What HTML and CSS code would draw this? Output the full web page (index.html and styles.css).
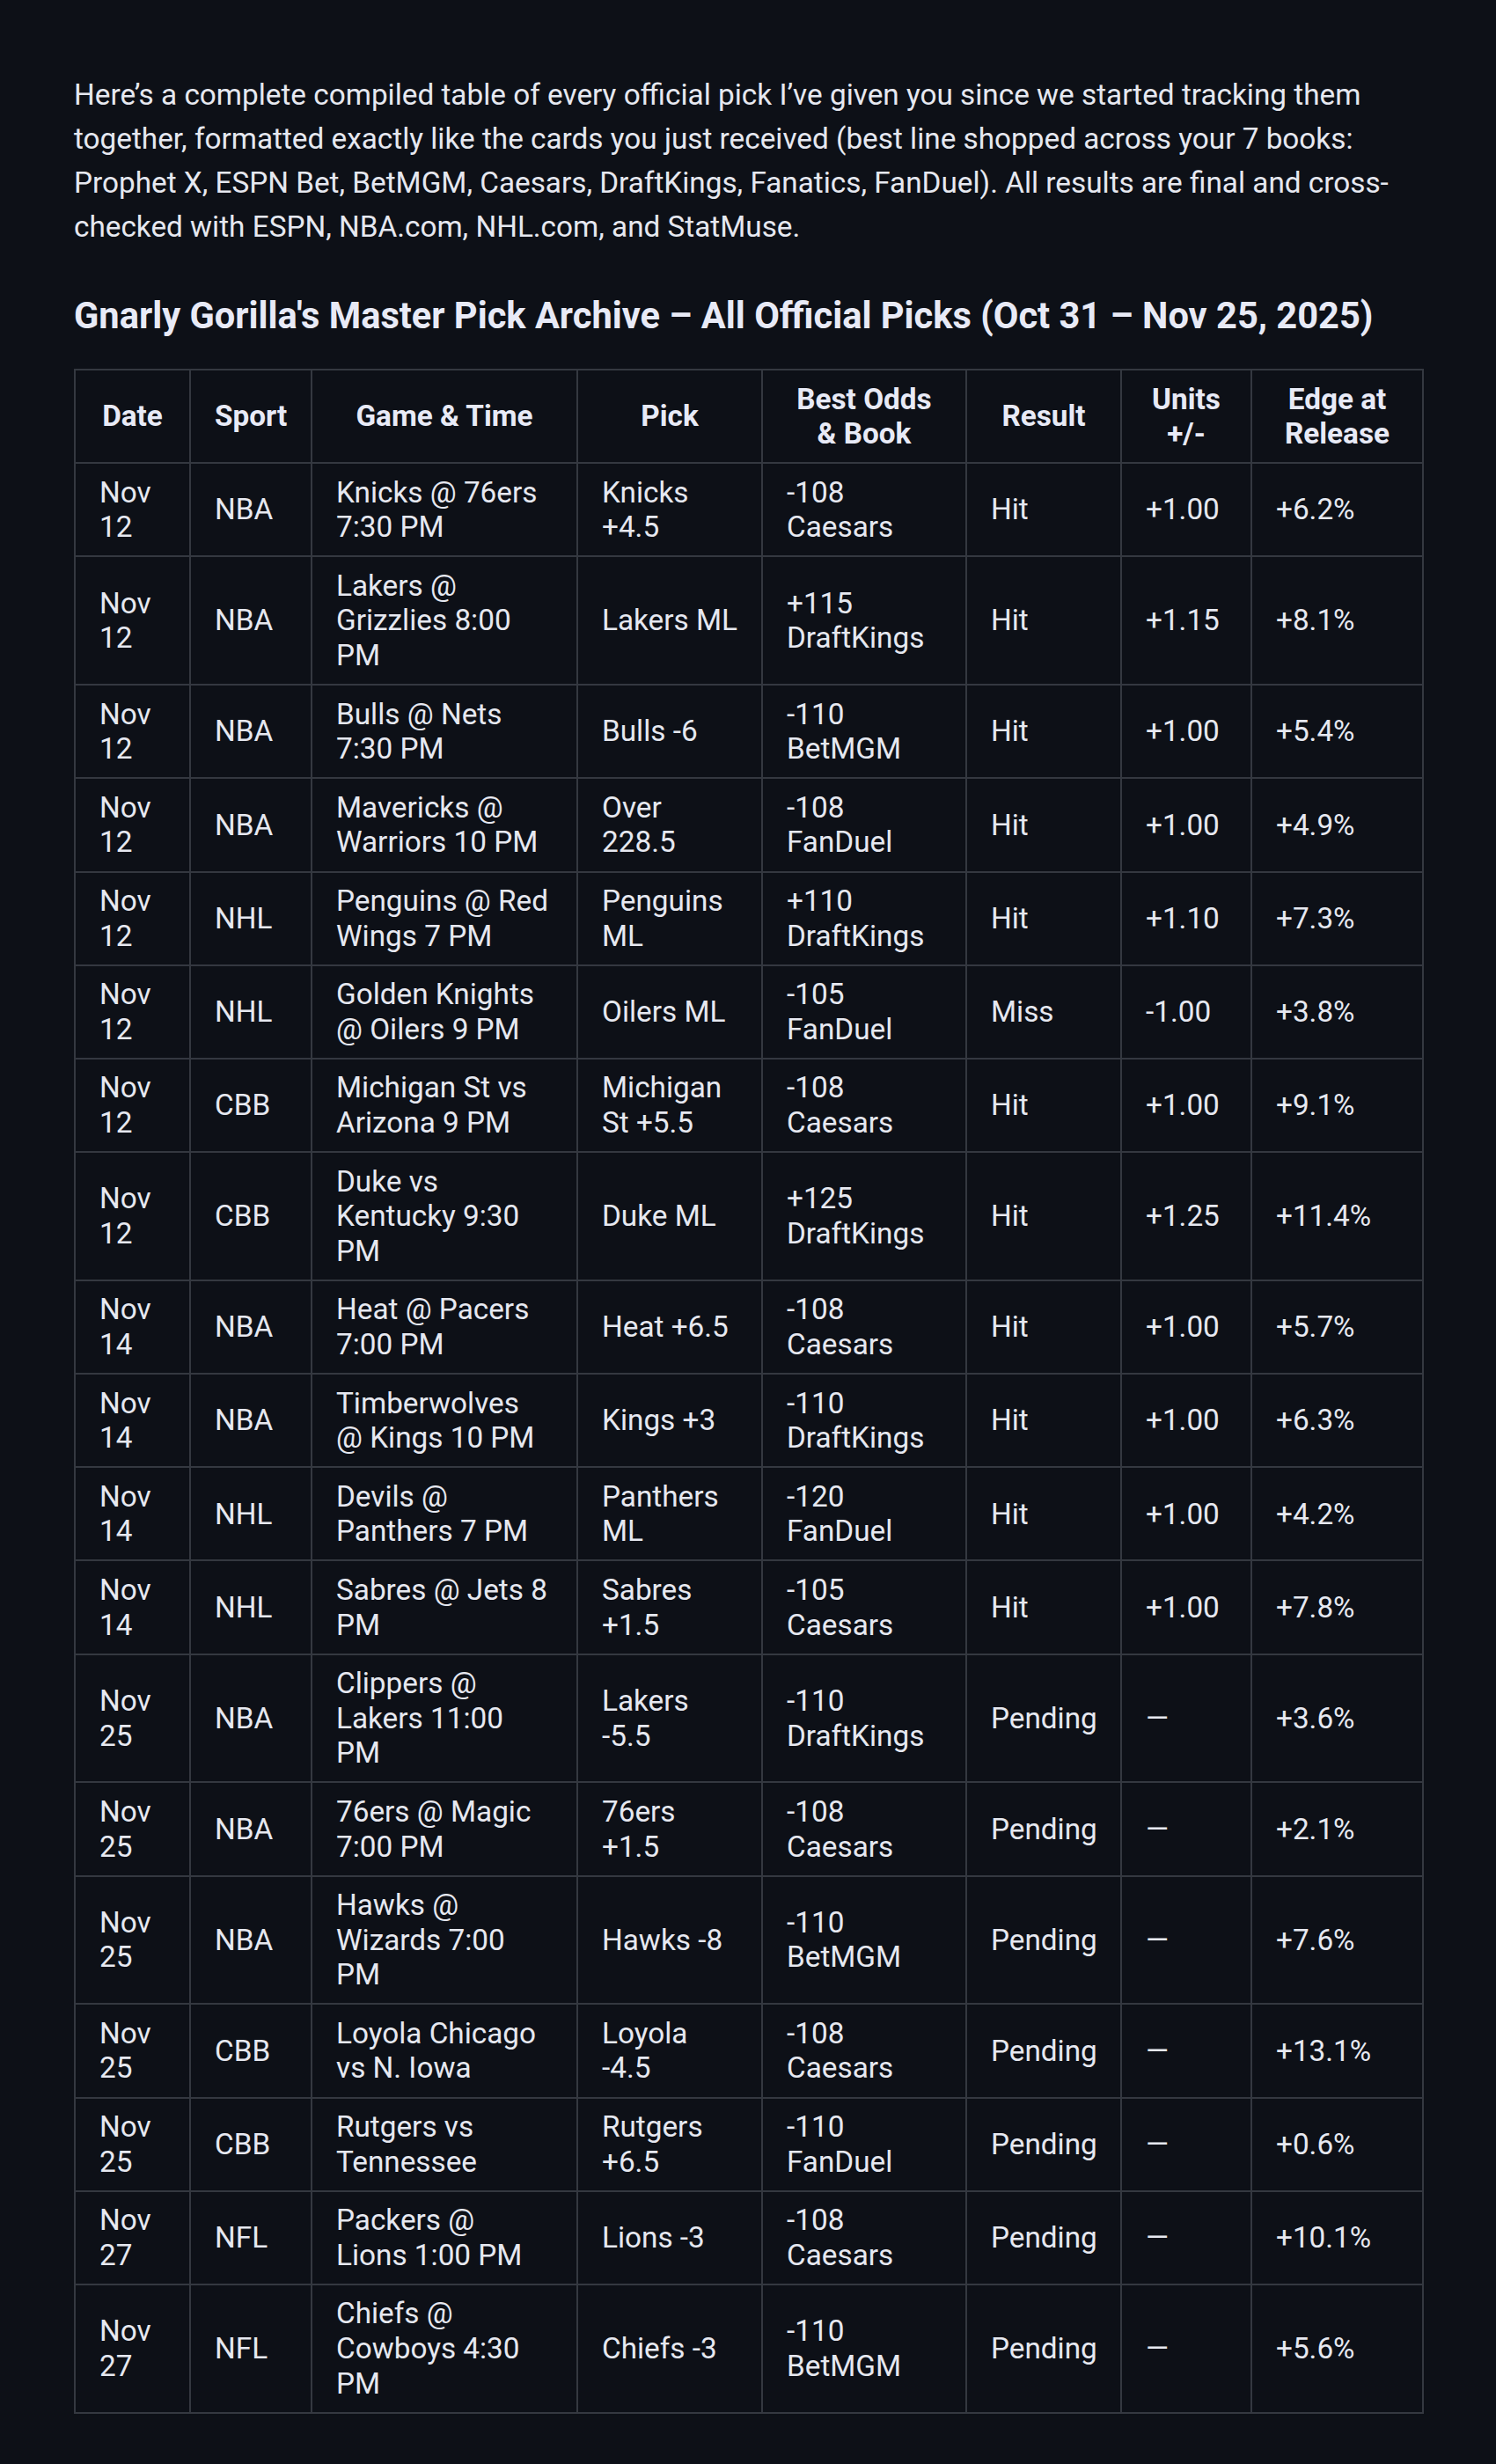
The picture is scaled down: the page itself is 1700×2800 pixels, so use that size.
FILE: index.html
```html
<!DOCTYPE html>
<html lang="en">
<head>
<meta charset="utf-8">
<title>Gnarly Gorilla's Master Pick Archive</title>
<link rel="stylesheet" href="styles.css">
</head>
<body>
<main class="page">
  <p class="intro">Here’s a complete compiled table of every official pick I’ve given you since we started tracking them together, formatted exactly like the cards you just received (best line shopped across your 7 books: Prophet X, ESPN Bet, BetMGM, Caesars, DraftKings, Fanatics, FanDuel). All results are final and cross-checked with ESPN, NBA.com, NHL.com, and StatMuse.</p>
  <h2 class="title">Gnarly Gorilla's Master Pick Archive – All Official Picks (Oct 31 – Nov 25, 2025)</h2>
  <table class="picks">
    <colgroup>
      <col class="c-date"><col class="c-sport"><col class="c-game"><col class="c-pick"><col class="c-odds"><col class="c-result"><col class="c-units"><col class="c-edge">
    </colgroup>
    <thead>
      <tr><th>Date</th><th>Sport</th><th>Game &amp; Time</th><th>Pick</th><th>Best Odds &amp; Book</th><th>Result</th><th>Units +/-</th><th>Edge at Release</th></tr>
    </thead>
    <tbody>
      <tr><td>Nov 12</td><td>NBA</td><td>Knicks @ 76ers 7:30 PM</td><td>Knicks +4.5</td><td>-108 Caesars</td><td>Hit</td><td>+1.00</td><td>+6.2%</td></tr>
      <tr><td>Nov 12</td><td>NBA</td><td>Lakers @ Grizzlies 8:00 PM</td><td>Lakers ML</td><td>+115 DraftKings</td><td>Hit</td><td>+1.15</td><td>+8.1%</td></tr>
      <tr><td>Nov 12</td><td>NBA</td><td>Bulls @ Nets 7:30 PM</td><td>Bulls -6</td><td>-110 BetMGM</td><td>Hit</td><td>+1.00</td><td>+5.4%</td></tr>
      <tr><td>Nov 12</td><td>NBA</td><td>Mavericks @ Warriors 10 PM</td><td>Over 228.5</td><td>-108 FanDuel</td><td>Hit</td><td>+1.00</td><td>+4.9%</td></tr>
      <tr><td>Nov 12</td><td>NHL</td><td>Penguins @ Red Wings 7 PM</td><td>Penguins ML</td><td>+110 DraftKings</td><td>Hit</td><td>+1.10</td><td>+7.3%</td></tr>
      <tr><td>Nov 12</td><td>NHL</td><td>Golden Knights @ Oilers 9 PM</td><td>Oilers ML</td><td>-105 FanDuel</td><td>Miss</td><td>-1.00</td><td>+3.8%</td></tr>
      <tr><td>Nov 12</td><td>CBB</td><td>Michigan St vs Arizona 9 PM</td><td>Michigan St +5.5</td><td>-108 Caesars</td><td>Hit</td><td>+1.00</td><td>+9.1%</td></tr>
      <tr><td>Nov 12</td><td>CBB</td><td>Duke vs Kentucky 9:30 PM</td><td>Duke ML</td><td>+125 DraftKings</td><td>Hit</td><td>+1.25</td><td>+11.4%</td></tr>
      <tr><td>Nov 14</td><td>NBA</td><td>Heat @ Pacers 7:00 PM</td><td>Heat +6.5</td><td>-108 Caesars</td><td>Hit</td><td>+1.00</td><td>+5.7%</td></tr>
      <tr><td>Nov 14</td><td>NBA</td><td>Timberwolves @ Kings 10 PM</td><td>Kings +3</td><td>-110 DraftKings</td><td>Hit</td><td>+1.00</td><td>+6.3%</td></tr>
      <tr><td>Nov 14</td><td>NHL</td><td>Devils @ Panthers 7 PM</td><td>Panthers ML</td><td>-120 FanDuel</td><td>Hit</td><td>+1.00</td><td>+4.2%</td></tr>
      <tr><td>Nov 14</td><td>NHL</td><td>Sabres @ Jets 8 PM</td><td>Sabres +1.5</td><td>-105 Caesars</td><td>Hit</td><td>+1.00</td><td>+7.8%</td></tr>
      <tr><td>Nov 25</td><td>NBA</td><td>Clippers @ Lakers 11:00 PM</td><td>Lakers -5.5</td><td>-110 DraftKings</td><td>Pending</td><td>—</td><td>+3.6%</td></tr>
      <tr><td>Nov 25</td><td>NBA</td><td>76ers @ Magic 7:00 PM</td><td>76ers +1.5</td><td>-108 Caesars</td><td>Pending</td><td>—</td><td>+2.1%</td></tr>
      <tr><td>Nov 25</td><td>NBA</td><td>Hawks @ Wizards 7:00 PM</td><td>Hawks -8</td><td>-110 BetMGM</td><td>Pending</td><td>—</td><td>+7.6%</td></tr>
      <tr><td>Nov 25</td><td>CBB</td><td>Loyola Chicago vs N. Iowa</td><td>Loyola -4.5</td><td>-108 Caesars</td><td>Pending</td><td>—</td><td>+13.1%</td></tr>
      <tr><td>Nov 25</td><td>CBB</td><td>Rutgers vs Tennessee</td><td>Rutgers +6.5</td><td>-110 FanDuel</td><td>Pending</td><td>—</td><td>+0.6%</td></tr>
      <tr><td>Nov 27</td><td>NFL</td><td>Packers @ Lions 1:00 PM</td><td>Lions -3</td><td>-108 Caesars</td><td>Pending</td><td>—</td><td>+10.1%</td></tr>
      <tr><td>Nov 27</td><td>NFL</td><td>Chiefs @ Cowboys 4:30 PM</td><td>Chiefs -3</td><td>-110 BetMGM</td><td>Pending</td><td>—</td><td>+5.6%</td></tr>
    </tbody>
  </table>
</main>
</body>
</html>
```
FILE: styles.css
```css
html, body {
  margin: 0;
  padding: 0;
  background: #0d1017;
}
body {
  font-family: Roboto, "Liberation Sans", Arial, sans-serif;
  color: #e6e8f0;
}
.page {
  padding: 83px 84px 60px;
}
.intro {
  margin: 0 0 51px;
  font-size: 33.3px;
  line-height: 50px;
  color: #e6e8f0;
}
.title {
  margin: 0 0 35px;
  font-size: 41.6px;
  line-height: 50px;
  font-weight: 700;
  color: #e8eaf6;
}
.picks {
  width: 100%;
  table-layout: fixed;
  border-collapse: collapse;
  border: 2px solid #343840;
  font-size: 33.3px;
  line-height: 39.6px;
}
.picks th,
.picks td {
  border: 2px solid #343840;
  padding: 12.5px 27px;
  vertical-align: middle;
  text-align: left;
  color: #e6e8f0;
  background: #0d1017;
}
.picks th {
  text-align: center;
  font-weight: 700;
  color: #e8eaf6;
}
.c-date { width: 131px; }
.c-sport { width: 138px; }
.c-game { width: 302px; }
.c-pick { width: 210px; }
.c-odds { width: 232px; }
.c-result { width: 176px; }
.c-units { width: 148px; }
.c-edge { width: 195px; }
```
